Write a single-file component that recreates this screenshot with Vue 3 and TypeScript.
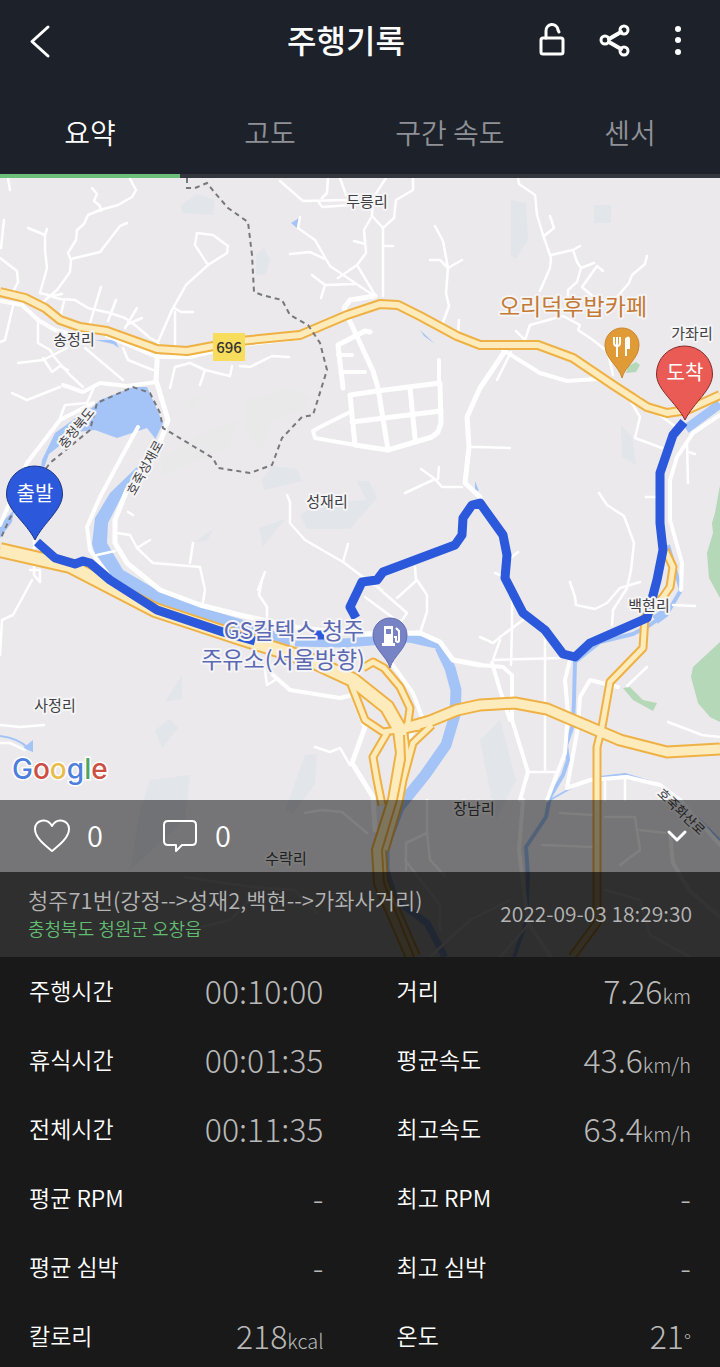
<script setup lang="ts">
import { ref } from 'vue'

interface Stat {
  label: string
  value: string
  unit?: string
}

interface Place {
  name: string
  x: number
  y: number
}

const tabs = ['요약', '고도', '구간 속도', '센서']
const activeTab = ref(0)

const stats: Stat[] = [
  { label: '주행시간', value: '00:10:00' },
  { label: '거리', value: '7.26', unit: 'km' },
  { label: '휴식시간', value: '00:01:35' },
  { label: '평균속도', value: '43.6', unit: 'km/h' },
  { label: '전체시간', value: '00:11:35' },
  { label: '최고속도', value: '63.4', unit: 'km/h' },
  { label: '평균 RPM', value: '-' },
  { label: '최고 RPM', value: '-' },
  { label: '평균 심박', value: '-' },
  { label: '최고 심박', value: '-' },
  { label: '칼로리', value: '218', unit: 'kcal' },
  { label: '온도', value: '21', unit: '°' },
]

const places: Place[] = [
  { name: '두릉리', x: 367, y: 207 },
  { name: '송정리', x: 74, y: 345 },
  { name: '가좌리', x: 692, y: 339 },
  { name: '성재리', x: 327, y: 507 },
  { name: '백현리', x: 649, y: 611 },
  { name: '사정리', x: 55, y: 711 },
  { name: '장남리', x: 474, y: 814 },
  { name: '수락리', x: 286, y: 864 },
]

const lanes = [
  '28,228 45,235', '47,229 45,235 45,250 47,268 40,293 52,296 62,294',
  '92,188 97,194 94,201 100,206 101,211',
  '130,179 136,190 132,197 118,205 100,210 88,215 84,224 77,230 76,240 68,253 71,260 70,272 57,290 43,302',
  '127,223 120,226 100,252 71,259', '8,178 10,190', '4,220 1,248', '0,258 17,271 18,282 14,290',
  '208,265 195,245 197,233 213,235 228,246 227,253 208,265 186,285 172,310 158,342',
  '174,308 181,312 193,312', '175,312 175,345',
  '47,295 60,299 75,300 88,308 110,313 125,318 135,325 150,338 158,342',
  '64,301 60,318', '101,287 90,323', '116,300 108,321', '137,308 125,328', '142,318 128,324',
  '18,363 43,360 67,348', '13,306 5,340 0,342', '38,318 38,343 50,350 55,358 70,375 83,387',
  '43,358 52,372 60,366 68,370', '85,348 123,380', '123,348 128,360 153,370',
  '170,388 175,367 190,363 205,370 230,376 232,366', '205,370 200,385', '240,366 250,367 272,356 289,357',
  '280,181 303,201 347,200', '318,201 322,207 350,205', '328,178 327,193 322,198', '340,178 346,195',
  '386,178 373,198 372,216 383,228 383,296', '413,178 413,190 396,200 394,218 383,228',
  '372,216 364,230 366,253 357,265 338,278', '357,265 375,295',
  '300,217 298,228 315,240 330,266 355,283 373,295', '290,254 310,252 325,259',
  '312,275 325,285 355,284', '325,285 321,298', '383,246 393,246', '354,241 365,244',
  '435,226 443,241 448,268 446,293 449,306 442,325', '430,260 440,260 448,268 462,260', '459,320 458,336',
  '518,178 519,184 535,195 537,215 543,235 551,258 550,268 540,291', '550,216 554,228 544,236',
  '551,255 573,250 580,246', '573,250 577,262 581,268 594,263', '581,268 577,282 568,290 568,310',
  '603,271 597,266 582,287 597,300', '647,256 645,264 632,275 629,283 617,297',
  '516,331 525,340 530,325 563,316 580,325 578,330 593,340 608,352 613,375', '511,352 497,380',
  '630,400 640,417 635,438 662,448', '657,413 680,430', '687,443 688,483', '688,452 695,454',
  '599,493 607,505 624,516 634,543 631,570 627,588', '646,497 655,497', '480,447 510,448', '468,447 480,447',
  '405,493 435,479 442,487 462,487', '421,469 435,479', '439,467 438,479',
  '287,495 290,502 290,523 305,540 343,562 363,577 382,590', '348,544 343,562', '265,572 258,590',
  '12,393 27,400 60,387', '95,385 87,403 65,405 60,418', '117,533 130,535 137,548 153,563 177,565 200,567 205,590 203,602',
  '137,548 150,540', '97,555 115,551', '193,543 190,563', '128,512 133,515',
  '34,541 34,575 40,582 40,570 30,570', '32,580 13,615 2,620 0,655', '0,725 20,727 44,725', '0,743 10,743 25,750',
  '262,580 259,595 267,607 267,620', '365,597 400,623', '375,585 407,613 400,623',
  '397,598 417,580 427,595 427,612 421,630', '415,567 416,580', '265,670 267,685 275,680',
  '315,747 330,752 340,748 350,765', '493,660 560,658', '545,625 545,770', '528,772 555,772',
  '512,600 512,627 511,665', '480,637 493,643 500,637 523,620', '493,660 500,640', '495,573 508,578', '508,560 518,552',
  '570,582 575,597 576,605 595,609 607,603 620,588 640,582', '627,588 613,610 612,625',
  '668,722 702,735 720,737', '673,605 695,606', '627,686 647,667', '605,780 605,800', '625,778 625,800',
  '305,813 321,810 342,812 367,833', '427,800 427,833 406,843 406,870', '427,833 430,860 445,876',
  '542,845 592,847', '560,813 592,815', '605,817 635,817 640,850 620,865', '640,830 665,833',
  '184,877 252,887 294,890 317,913', '257,893 230,920 202,927', '430,957 470,920 510,900', '528,925 500,957',
  '605,890 640,900 650,935 690,957', '405,860 440,905 440,930',
]

const streets = [
  '0,301 22,305 38,320 55,330 80,336', '107,336 157,357 190,357 240,345 300,338',
  '63,385 83,392 100,383 127,386 157,382', '93,403 60,420 27,463 0,525',
  '138,427 127,447 100,497 87,527 90,550 110,577',
  '350,412 320,427 313,431 315,438 355,445', '338,355 352,355', '341,372 365,372',
  '439,360 439,383', '503,350 540,373 567,381 597,379 640,398',
  '720,415 693,433 677,457 670,480 670,520 682,563 681,590',
  '273,675 290,690 340,698 353,695', '387,657 413,693 422,717',
  '480,665 503,667 512,675 512,720 528,772 520,800', '492,663 500,690 510,720',
  '570,660 565,680 568,713 565,753 547,800',
  '618,687 590,680 580,697 578,727 567,788 590,780 627,777 660,785 680,800 720,845',
  '523,800 519,850 528,923 551,957', '670,833 673,863 689,890 720,917', '422,717 405,745',
]

const avenues = [
  '158,345 156,380 168,420 160,443 127,490 115,520 115,543 127,563 160,590 200,605 240,615 300,628 360,634 420,633 440,642 453,660 480,665',
  '375,296 350,300 344,308 347,315 373,371 378,388 388,450', '370,332 365,331 338,345 343,388',
  '377,391 350,395 355,445 388,450 432,437 438,432 441,423 440,383 377,391',
  '410,388 415,438', '352,422 441,411', '505,351 480,388 467,417 469,447 465,483 480,497',
  '353,695 365,727 352,763 373,797 375,830',
]

const ramps = [
  '363,668 373,662 384,668 400,687 410,708 407,730', '351,684 365,720 383,732 420,727',
  '387,733 373,757 377,780 382,805', '432,725 413,743 403,780 399,802 385,850',
  '665,550 673,567 670,587 663,597 645,617 643,648 610,682 602,727 597,747 597,800 597,923 572,957',
]

const localHighway =
  '0,292 25,298 45,308 60,320 80,327 107,331 157,349 187,351 240,341 300,335 347,315 380,304 398,305 420,316 457,336 480,345 538,345 573,358 613,385 647,407 667,413 687,410 720,395'
const expressway =
  '0,550 70,566 155,610 240,638 310,660 353,680 387,707 400,730 403,753 395,800 379,850 381,883 413,957'
const crossHighway = '405,728 430,721 457,710 480,705 515,703 547,709 620,740 667,752 720,749'
const route =
  '37,542 55,558 75,564 83,561 90,563 110,580 157,610 223,632 255,641 M 314,635 L 324,635 M 356,618 L 350,607 362,582 377,580 383,572 455,545 462,535 463,518 472,505 480,503 503,535 507,555 505,578 523,613 545,630 563,654 575,657 590,643 647,618 657,580 663,550 660,523 660,473 673,435 684,422'
const border =
  '187,178 187,188 195,188 207,183 215,193 228,208 248,222 252,255 254,292 262,295 282,300 290,315 308,325 320,343 327,370 313,415 302,417 282,438 272,465 250,473 218,468 213,458 163,428 160,413 150,393 133,387 97,403 90,430 50,463 10,518 0,540'
</script>

<template>
  <main class="page">
    <header class="top">
      <div class="bar">
        <button class="icon-btn back" type="button" aria-label="뒤로">
          <svg width="24" height="36" viewBox="0 0 24 36" class="line">
            <path d="M20 4 4 18.500l16 14.500" stroke-width="3" />
          </svg>
        </button>
        <h1 class="title">주행기록</h1>
        <button class="icon-btn" type="button" aria-label="잠금 해제">
          <svg width="36" height="40" viewBox="0 0 36 40" class="line">
            <rect x="7" y="17" width="22" height="16" rx="2" stroke-width="3" />
            <path d="M12 17v-7a6 6 0 0 1 12-1l1 2" stroke-width="3" />
          </svg>
        </button>
        <button class="icon-btn" type="button" aria-label="공유">
          <svg width="36" height="40" viewBox="0 0 36 40" class="line">
            <path d="m12 18 12-7M12 21l12 7" stroke-width="4" />
            <circle cx="8" cy="19" r="4" stroke-width="3" />
            <circle cx="27" cy="9" r="4" stroke-width="3" />
            <circle cx="27" cy="30" r="4" stroke-width="3" />
          </svg>
        </button>
        <button class="icon-btn" type="button" aria-label="더보기">
          <svg width="12" height="40" viewBox="0 0 12 40" fill="#fff">
            <circle cx="6" cy="8" r="3" />
            <circle cx="6" cy="19" r="3" />
            <circle cx="6" cy="31" r="3" />
          </svg>
        </button>
      </div>
      <nav class="tabs" role="tablist">
        <button
          v-for="(tab, i) in tabs"
          :key="tab"
          type="button"
          role="tab"
          class="tab"
          :class="{ active: i === activeTab }"
          :aria-selected="i === activeTab"
          @click="activeTab = i"
        >
          {{ tab }}
        </button>
      </nav>
    </header>

    <section class="map-area">
      <svg class="map" viewBox="0 178 720 779">
        <rect y="178" width="720" height="779" fill="#ebe9ec" />
        <g fill="#e2e5ea">
          <path d="M181 205l16-11 18 6-2 15-31-2zM256 255l8-7 6 12-5 15-9-1zM511 200l15 3 2 37-12 19-5-4zM594 205h17v18h-17zM262 480l10-14 25 3 5 12-38 9zM300 515l18-11 48-4-9-19h12l8 17-27 31h-43zM259 528l26-9-22 28zM621 425l11 12 4 28-14-8zM165 702l17-27v24zM155 730l15-11 8 9-16 20zM195 542l18-13-6 12zM305 755l12-1-2 30-22 30-8-3zM150 780l40-5-5 45-55 50 10-60zM480 740l20-20 16 60-20 40z" />
        </g>
        <g fill="#eae9ea">
          <path d="M246 400l40-12 26 8-10 14-30 12-11 28-16-18zM190 400l15-8-15 20zM160 460l40-26 38-15-8 28-45 20-22 10z" />
        </g>
        <g fill="#b5d8b9">
          <path d="M720 485l-5 28-3 10 1 10-6 20 2 25 11 20zM720 642l-27 25-2 10 7 26 12 14 10 5zM623 688l7-1 13 13 14 3-4 8-20-11zM628 366l8-4 4 3-4 7-10 1z" />
        </g>
        <g fill="#a4c4f7">
          <path d="M42 460l13-27 22-16 16-10 7-7 33-13 14 0 16 36-16 34-20 29-19 37-1 20 16 27 34 20 43 17 40 12 50 18v10l-50-8-40-8-50-20-33-20-17-20-8-27 3-26 15-25 30-29 17-23-10-13-30 10-22-8-18 2-28 22-10 28zM0 524l14-14-2 12-12 16z" />
          <path d="M291 223l8-5-2 10zM420 330l15 14-11-8zM23 748l10-8v12zM475 481l4 10-4-1zM95 340l20 0 4 8-6-4z" />
        </g>
        <g class="water">
          <path d="M295 642 L345 643 370 641 410 638 441 645" stroke-width="9" />
          <path d="M440 647 L450 668 456 690 455 715 446 745 425 775 400 806" stroke-width="11" />
          <path d="M404 800 L386 847 386 870 395 900 427 923 445 957" stroke-width="7" />
          <path d="M575 660 L574 700 573 725 566 745 568 760 563 775 550 797 546 817 526 847 528 877 526 923 514 957" stroke-width="4" />
          <path d="M575 662 L600 642 633 634 650 625 668 612 681 590 668 545" stroke-width="4" />
          <path d="M655 620 L666 612" stroke-width="9" />
          <path d="M550 800 L580 783 600 777 625 774 655 783 680 800 720 840" stroke-width="2" />
          <path d="M686 429 L720 404" stroke-width="9" />
          <path d="M0 736 Q18 738 28 748" stroke-width="2" />
        </g>
        <g class="road">
          <polyline v-for="p in lanes" :key="p" :points="p" stroke-width="2.5" />
          <polyline v-for="p in streets" :key="p" :points="p" stroke-width="4" />
          <polyline v-for="p in avenues" :key="p" :points="p" stroke-width="5" />
        </g>
        <g class="road-edge">
          <polyline :points="localHighway" stroke-width="10" />
          <polyline v-for="p in ramps" :key="p" :points="p" stroke-width="9" />
          <polyline :points="crossHighway" stroke-width="13" />
          <polyline :points="expressway" stroke-width="16" />
        </g>
        <g class="road-core">
          <polyline :points="localHighway" stroke-width="6" />
          <polyline v-for="p in ramps" :key="p" :points="p" stroke-width="5" />
          <polyline :points="crossHighway" stroke-width="9" />
          <polyline :points="expressway" stroke-width="12" />
        </g>
        <path d="M404 735 L405 760 397 800 382 850 384 883 414 957" fill="none" stroke="#efb143" stroke-width="2" />
        <polyline :points="border" fill="none" stroke="#77787d" stroke-width="2" stroke-dasharray="5 4" />
        <path :d="'M ' + route" fill="none" stroke="#2c59db" stroke-width="9" stroke-linejoin="round" />

        <rect x="213" y="333" width="32" height="28" fill="#f8dc5c" />
        <text x="229" y="353" class="shield">696</text>

        <g class="label">
          <text v-for="p in places" :key="p.name" :x="p.x" :y="p.y">{{ p.name }}</text>
        </g>
        <g class="label street-label">
          <text transform="translate(80 431) rotate(-51)">충청북도</text>
          <text transform="translate(149 470) rotate(-61)">호죽성재로</text>
          <text transform="translate(678 815) rotate(44)">호죽화산로</text>
        </g>

        <g class="poi">
          <text x="573" y="315" fill="#c47a33">오리덕후밥카페</text>
          <text x="294" y="639" fill="#5b69b3">GS칼텍스 청주</text>
          <text x="283" y="668" fill="#5b69b3">주유소(서울방향)</text>
        </g>

        <path d="M622 378C619 366 605 359 605 345a17 17 0 0 1 34 0C639 359 625 366 622 378Z" fill="#e09b36" stroke="#c9862a" />
        <g fill="none" stroke="#fff" stroke-width="2">
          <path d="M614 337v6q0 3 3 3t3-3v-6M617 337v20" />
          <path d="M626 356v-17q3-3 3 0v9h-3" fill="#fff" />
        </g>
        <path d="M390 668C387 656 373 649 373 635a17 17 0 0 1 34 0C407 649 393 656 390 668Z" fill="#7783c5" stroke="#606db1" />
        <path d="M384 626h9v17h2v3h-13v-3h2zM386 629v5h5v-5z" fill="#fff" fill-rule="evenodd" />
        <path d="M394 637h2v4q2 2 3 0v-10l-3-3" fill="none" stroke="#fff" stroke-width="2" />

        <path d="M35 540C26 522 6.500 510 6.500 494a28 28 0 0 1 56 0C62.500 510 44 522 35 540Z" fill="#2c59db" stroke="#1b3784" />
        <path d="M685 420C676 402 656.500 390 656.500 374a28 28 0 0 1 56 0C712.500 390 694 402 685 420Z" fill="#ea5b55" stroke="#832b2c" />
        <g class="pin-text">
          <text x="35" y="501">출발</text>
          <text x="685" y="380">도착</text>
        </g>

        <text x="12" y="779" class="brand"><tspan fill="#4f7fdc">G</tspan><tspan fill="#cc4f43">o</tspan><tspan fill="#e9bd4d">o</tspan><tspan fill="#4f7fdc">g</tspan><tspan fill="#4fa45f">l</tspan><tspan fill="#cc4f43">e</tspan></text>
      </svg>

      <div class="overlay">
        <div class="social">
          <button class="react" type="button" aria-label="좋아요">
            <svg width="38" height="36" viewBox="0 0 38 36" class="line">
              <path d="M19 33C13 28 2 20 2 11 2 2 14-1 19 8 24-1 36 2 36 11c0 9-11 17-17 22Z" stroke-width="2" />
            </svg>
            <span>0</span>
          </button>
          <button class="react" type="button" aria-label="댓글">
            <svg width="38" height="36" viewBox="0 0 38 36" class="line">
              <path d="M7 3h24q4 0 4 4v16q0 4-4 4H21l-6 6v-6H7q-4 0-4-4V7q0-4 4-4Z" stroke-width="2" />
            </svg>
            <span>0</span>
          </button>
          <button class="fold" type="button" aria-label="접기">
            <svg width="24" height="16" viewBox="0 0 24 16" class="line">
              <path d="m4 4 8 8 8-8" stroke-width="3" />
            </svg>
          </button>
        </div>
        <div class="info">
          <div class="info-text">
            <p class="course">청주71번(강정--&gt;성재2,백현--&gt;가좌사거리)</p>
            <p class="region">충청북도 청원군 오창읍</p>
          </div>
          <time class="date" datetime="2022-09-03T18:29:30">2022-09-03 18:29:30</time>
        </div>
      </div>
    </section>

    <dl class="stats">
      <div v-for="s in stats" :key="s.label" class="stat">
        <dt>{{ s.label }}</dt>
        <dd>{{ s.value }}<small v-if="s.unit">{{ s.unit }}</small></dd>
      </div>
    </dl>
  </main>
</template>

<style>
body {
  background: #191919;
}
</style>

<style scoped>
.page {
  font-family: "Noto Sans CJK KR", "Noto Sans", sans-serif;
  font-weight: 350;
  color: #fff;
  background: #191919;
}
button {
  padding: 0;
  border: 0;
  background: none;
  color: inherit;
  font: inherit;
  cursor: pointer;
}
svg {
  display: block;
}
.line {
  fill: none;
  stroke: #fff;
  stroke-linecap: round;
  stroke-linejoin: round;
}
.top {
  background: #1d2129;
}
.bar {
  display: flex;
  align-items: center;
  height: 82px;
  padding-right: 11px;
}
.icon-btn {
  display: flex;
  align-items: center;
  justify-content: center;
  width: 63px;
  height: 63px;
}
.back {
  width: 80px;
}
.title {
  flex: 1;
  margin: 0;
  padding: 0 0 5px 92px;
  font-size: 32px;
  font-weight: 500;
  line-height: 48px;
  text-align: center;
}
.tabs {
  display: grid;
  grid-template-columns: repeat(4, 1fr);
}
.tab {
  height: 96px;
  padding-top: 8px;
  border-bottom: 4px solid #34363e;
  color: #8f9197;
  font-size: 28px;
  line-height: 40px;
}
.tab.active {
  border-color: #6abf7a;
  color: #fff;
}
.map-area {
  position: relative;
}
.map {
  width: 100%;
  height: auto;
}
.water,
.road,
.road-edge,
.road-core {
  fill: none;
  stroke-linejoin: round;
}
.water {
  stroke: #a4c4f7;
}
.road {
  stroke: #fff;
  stroke-linecap: round;
}
.road-edge {
  stroke: #efb143;
}
.road-core {
  stroke: #fdebbb;
}
.label,
.poi {
  text-anchor: middle;
  stroke: #f5f4f6;
  stroke-width: 4px;
  stroke-linejoin: round;
  paint-order: stroke;
}
.label {
  fill: #3f4043;
  font-size: 15px;
  font-weight: 400;
}
.street-label {
  font-size: 13px;
}
.poi {
  font-size: 23px;
  font-weight: 400;
}
.shield {
  fill: #333;
  font-size: 15px;
  font-weight: 500;
  text-anchor: middle;
}
.pin-text {
  fill: #fff;
  font-size: 20px;
  font-weight: 400;
  text-anchor: middle;
}
.brand {
  font-family: Inter, "Liberation Sans", sans-serif;
  font-size: 28px;
  font-weight: 500;
  stroke: #fff;
  stroke-width: 3px;
  paint-order: stroke;
}
.overlay {
  position: absolute;
  right: 0;
  bottom: 0;
  left: 0;
}
.social {
  display: flex;
  align-items: center;
  gap: 58px;
  height: 72px;
  padding: 0 31px 0 33px;
  background: rgba(0, 0, 0, 0.5);
}
.react {
  display: flex;
  align-items: center;
  gap: 16px;
  font-size: 29px;
  line-height: 40px;
}
.react span {
  padding-bottom: 5px;
}
.fold {
  margin-left: auto;
}
.info {
  display: flex;
  align-items: center;
  justify-content: space-between;
  height: 81px;
  padding: 0 28px 4px;
  background: rgba(0, 0, 0, 0.8);
}
.course,
.region {
  margin: 0;
}
.course {
  color: #b4b4b4;
  font-size: 22px;
  line-height: 30px;
}
.region {
  color: #62bd72;
  font-size: 18px;
  line-height: 28px;
}
.date {
  color: #b4b4b4;
  font-size: 21px;
  line-height: 28px;
}
.stats {
  display: grid;
  grid-template-columns: 1fr 1fr;
  column-gap: 73px;
  margin: 0;
  padding: 0 29px;
}
.stat {
  display: flex;
  align-items: center;
  justify-content: space-between;
  height: 65px;
  padding-bottom: 4px;
}
dt {
  font-size: 23px;
  line-height: 32px;
}
dd {
  margin: 0;
  color: #b9b9b9;
  font-size: 32px;
  font-weight: 300;
  line-height: 40px;
}
small {
  font-size: 20px;
  line-height: 20px;
}
</style>
